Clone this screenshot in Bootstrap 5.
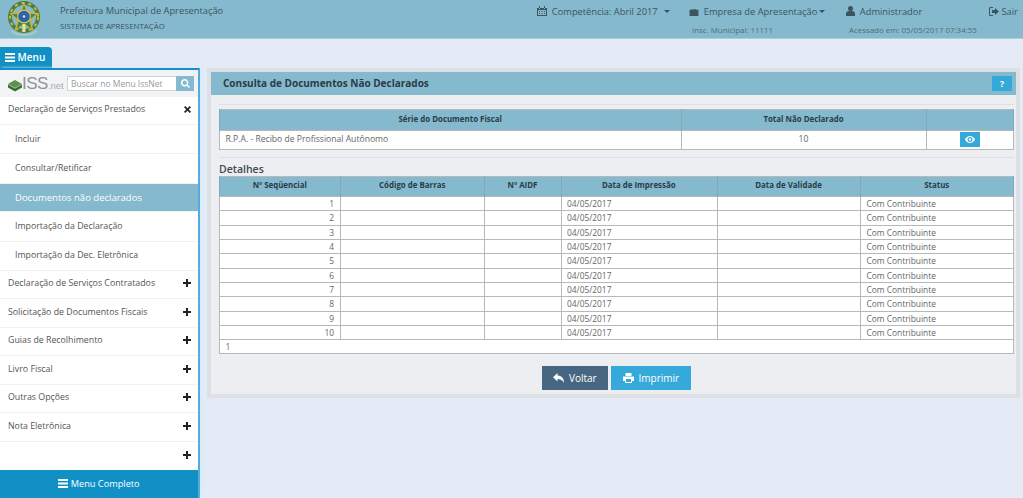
<!DOCTYPE html>
<html lang="pt-BR">
<head>
    <meta charset="UTF-8">
    <title>Consulta de Documentos Não Declarados</title>
    <link href="https://cdn.jsdelivr.net/npm/bootstrap@5.3.0/dist/css/bootstrap.min.css" rel="stylesheet">
    <style>
        html, body { height: 498px; overflow: hidden; }
        body { background: #e4ebf6; font-family: "Open Sans", sans-serif; font-size: 9px; color: #555; }
        svg { fill: currentColor; vertical-align: -1px; }

        /* topo */
        .topbar { height: 39px; background: #85b9cd; border-bottom: 1px solid #a9cfdc; color: #3c5460; }
        .brand-logo { width: 36px; height: 36px; margin: 1px 17px 0 7px; }
        .brand-title { font-size: 9.3px; line-height: 12px; padding-top: 5px; }
        .brand-sub { font-size: 7.9px; line-height: 12px; margin-top: 3px; }
        .top-item { font-size: 9.3px; line-height: 13px; padding-top: 5px; white-space: nowrap; }
        .top-sub { font-size: 7.9px; line-height: 12px; margin: 6px 0 0 3px; color: #4f6e7b; }
        .top-comp { width: 152px; }
        .top-emp { width: 157px; }
        .top-adm { width: 143px; }
        .top-exit { width: 34px; }
        .caret-down { display: inline-block; border: 3px solid transparent; border-top-color: currentColor; border-bottom: 0; margin-left: 2px; vertical-align: 2px; }

        /* menu */
        .menu-tab { width: 52px; height: 21px; margin-top: 8px; background: #1190c6; color: #fff; font-size: 10px; font-weight: 600; line-height: 21px; padding-left: 5px; border-radius: 0 4px 0 0; }
        .side-menu { width: 200px; height: 430px; background: #fff; border-top: 2px solid #1190c6; border-right: 2px solid #5ba9dc; box-shadow: 2px 0 3px #d3eefb; }
        .search-row { height: 27px; padding: 6px 4px 0 8px; background: #f2f3f5; flex-shrink: 0; }
        .iss-logo { width: 59px; font-family: "Liberation Sans", sans-serif; font-size: 17px; line-height: 16px; color: #8d9599; letter-spacing: -0.5px; }
        .iss-logo span { font-size: 9.5px; letter-spacing: 0; line-height: 19px; color: #a5adb1; }
        .menu-search { width: 109px; height: 15px; border: 1px solid #cdd6da; border-right: 0; padding: 0 3px; font-size: 8.5px; color: #999; background: #fff; line-height: 13px; }
        .menu-search-btn { width: 18px; height: 15px; background: #85b9cd; color: #fff; }
        .menu-list { min-height: 0; overflow: hidden; }
        .menu-list .list-group-item { height: 28.5px; flex-shrink: 0; padding: 0 7px 3px 8px; border-color: #f1f2f3; border-width: 0 0 1px; font-size: 8.8px; color: #555; line-height: 22px; }
        .menu-list .list-group-item:first-child { height: 28px; }
        .menu-list .sub-item { height: 29.4px; padding: 0 7px 0 15px; line-height: 27px; }
        .menu-list .list-group-item.active { background: #85b9cd; color: #fff; font-size: 9.5px; }
        .menu-list .list-group-item svg { color: #222; }
        .menu-full { height: 28px; flex-shrink: 0; background: #1190c6; color: #fff; font-size: 9.2px; line-height: 28px; }

        /* painel */
        .main-area { padding: 29px 4px 0 7px; }
        .panel-box { height: 330px; background: #eceef2; border: 4px solid #dde0e5; }
        .panel-title { height: 23px; background: #85b9cd; color: #2a3d48; font-size: 10px; font-weight: 700; line-height: 22px; padding: 0 4px 0 12px; }
        .help-btn { width: 20px; height: 15px; background: #36a9db; color: #fff; font-size: 8.5px; font-weight: 700; line-height: 15px; margin-top: 4px; }
        .panel-content { padding: 0 2px 0 8px; }
        .rule { height: 1px; background: #dcdfe3; }
        .rule-top { margin-top: 9px; margin-bottom: 4px; }
        .rule-mid { margin-top: 7px; }
        .section-title { font-size: 10.5px; font-weight: 600; line-height: 12.500px; margin-top: 5px; color: #3d4a52; }

        .doc-table { table-layout: fixed; width: 794px; margin: 0; background: #fff; border-color: #b5b9bc; font-size: 8.4px; }
        .table.doc-table > * > * > * { padding: 0 6px 0 5.500px; color: #666; background: transparent; box-shadow: none; }
        .table.doc-table > thead > tr > th { background: #85b9cd; color: #2a3d48; font-size: 7.9px; font-weight: 700; text-align: center; border-color: #7fabbc; height: 20.600px; vertical-align: middle; }
        .summary-table tbody td { height: 19.500px; vertical-align: middle; font-size: 8.6px; }
        .detail-table tbody td { height: 14.300px; line-height: 13.300px; }
        .w1 { width: 462px; } .w2 { width: 244.500px; } .w3 { width: 87.500px; }
        .d1 { width: 121px; } .d2 { width: 144px; } .d3 { width: 76.500px; } .d4 { width: 156px; } .d5 { width: 143.500px; } .d6 { width: 153px; }
        .eye-btn { width: 20px; height: 15px; background: #36a9db; color: #fff; }

        .action-btn { height: 24px; border: 0; border-radius: 0; color: #fff; font-size: 10px; line-height: 24px; padding: 0; }
        .action-btn:hover { color: #fff; }
        .action-btn svg { margin-right: 2px; }
        .btn-voltar { width: 66px; background: #466682; }
        .btn-imprimir { width: 80px; background: #36a9db; }
        .action-row { margin-top: 11.500px; gap: 3px; }
    </style>
</head>
<body>
    <!-- topo -->
    <header class="topbar d-flex">
        <svg class="brand-logo flex-shrink-0" viewBox="0 0 36 36">
            <circle cx="17" cy="16" r="14" fill="none" stroke="#4d7f3c" stroke-width="4"/>
            <circle cx="17" cy="16" r="14" fill="none" stroke="#d2b545" stroke-width="2" stroke-dasharray="3 4"/>
            <path d="M17 1l4 10 11 1-8.500 7 3 11L17 24l-9.500 6 3-11L2 12l11-1z" fill="#cdb23f"/>
            <path d="M17 4l3 8.500 9 .7-7 5.800 2.400 8.800L17 22.500 9.600 27.800 12 19l-7-5.800 9-.7z" fill="#3f8a45"/>
            <circle cx="17" cy="15.500" r="7" fill="#d9c25a"/>
            <circle cx="17" cy="15.500" r="5.800" fill="#2d62ad"/>
            <circle cx="17" cy="15.500" r="1.200" fill="#dfe8f2"/>
            <rect x="15.500" y="23" width="3" height="8" fill="#e8dca0"/>
            <path d="M5 29c4 3 8 4 12 4s8-1 12-4l1 2c-4 3-9 4-13 4s-9-1-13-4z" fill="#a9cbbd"/>
        </svg>
        <div class="flex-shrink-0">
            <div class="brand-title">Prefeitura Municipal de Apresentação</div>
            <div class="brand-sub">SISTEMA DE APRESENTAÇÃO</div>
        </div>
        <div class="ms-auto d-flex">
            <div class="top-item top-comp">
                <svg width="10" height="10" viewBox="0 0 10 10"><path d="M0 2h10v8H0zM1 4v5h8V4zM2 0h1v3H2zM7 0h1v3H7zM2 5h1v1H2zM4.500 5h1v1h-1zM7 5h1v1H7zM2 7h1v1H2zM4.500 7h1v1h-1zM7 7h1v1H7z" fill-rule="evenodd"/></svg>
                &nbsp;Competência: Abril 2017 <span class="caret-down ms-1"></span>
            </div>
            <div class="top-item top-emp">
                <svg width="10" height="8" viewBox="0 0 10 9"><path d="M3 2V1h4v1h3v7H0V2zM4 1.500V2h2v-.5z" fill-rule="evenodd"/></svg>
                &nbsp;Empresa de Apresentação<span class="caret-down"></span>
                <div class="top-sub">Insc. Municipal: 11111</div>
            </div>
            <div class="top-item top-adm">
                <svg width="9" height="10" viewBox="0 0 9 10"><circle cx="4.500" cy="2.500" r="2.500"/><path d="M0 10V7.500C0 6 1.500 5 3 5h3c1.500 0 3 1 3 2.500V10z"/></svg>
                &nbsp;Administrador
                <div class="top-sub">Acessado em: 05/05/2017 07:34:55</div>
            </div>
            <div class="top-item top-exit">
                <svg width="10" height="9" viewBox="0 0 10 9"><path d="M0 1.500C0 .7.7 0 1.500 0H4v1H1.500a.5.5 0 0 0-.5.5v6c0 .3.2.5.5.5H4v1H1.500C.7 9 0 8.300 0 7.500zM3 3h3V1l4 3.500L6 8V6H3z"/></svg>
                Sair
            </div>
        </div>
    </header>

    <div class="d-flex">
        <!-- menu lateral -->
        <div class="flex-shrink-0">
            <div class="menu-tab">
                <svg width="10" height="9" viewBox="0 0 10 9"><path d="M0 0h10v2H0zM0 3.500h10v2H0zM0 7h10v2H0z"/></svg> Menu
            </div>
            <nav class="side-menu d-flex flex-column">
                <div class="search-row d-flex">
                    <div class="iss-logo d-flex align-items-start">
                        <svg width="14" height="12" viewBox="0 0 14 12" class="flex-shrink-0 mt-1"><path d="M7 0l7 4-7 4-7-4z" fill="#5c9150"/><path d="M0 4.500l7 4 7-4v3l-7 4-7-4z" fill="#3d6a37"/></svg>
                        ISS<span>.net</span>
                    </div>
                    <div class="menu-search">Buscar no Menu IssNet</div>
                    <div class="menu-search-btn d-flex align-items-center justify-content-center">
                        <svg width="9" height="9" viewBox="0 0 9 9"><path d="M3.700 0a3.700 3.700 0 0 1 3 5.800L9 8l-1 1-2.300-2.300A3.700 3.700 0 1 1 3.700 0zm0 1.500a2.200 2.200 0 1 0 0 4.400 2.200 2.200 0 0 0 0-4.400z" fill-rule="evenodd"/></svg>
                    </div>
                </div>
                <div class="list-group list-group-flush menu-list rounded-0 flex-grow-1" id="menuList"></div>
                <div class="menu-full text-center">
                    <svg width="10" height="9" viewBox="0 0 10 9"><path d="M0 0h10v2H0zM0 3.500h10v2H0zM0 7h10v2H0z"/></svg> Menu Completo
                </div>
            </nav>
        </div>

        <!-- conteúdo -->
        <main class="main-area flex-grow-1">
            <div class="panel-box">
                <div class="panel-title d-flex justify-content-between">
                    <span>Consulta de Documentos Não Declarados</span>
                    <div class="help-btn text-center">?</div>
                </div>
                <div class="panel-content">
                    <div class="rule rule-top"></div>
                    <table class="table table-bordered doc-table summary-table">
                        <colgroup><col class="w1"><col class="w2"><col class="w3"></colgroup>
                        <thead>
                            <tr><th>Série do Documento Fiscal</th><th>Total Não Declarado</th><th></th></tr>
                        </thead>
                        <tbody>
                            <tr>
                                <td>R.P.A. - Recibo de Profissional Autônomo</td>
                                <td class="text-center">10</td>
                                <td class="text-center">
                                    <button class="btn eye-btn p-0 border-0 rounded-0 d-inline-flex align-items-center justify-content-center align-middle">
                                        <svg width="10" height="7" viewBox="0 0 10 7"><path d="M5 0c2.200 0 4 1.500 5 3.500C9 5.500 7.200 7 5 7S1 5.500 0 3.500C1 1.500 2.800 0 5 0zm0 1a2.500 2.500 0 1 0 0 5 2.500 2.500 0 0 0 0-5zm0 1.200a1.300 1.300 0 1 1 0 2.600 1.300 1.300 0 0 1 0-2.600z" fill-rule="evenodd"/></svg>
                                    </button>
                                </td>
                            </tr>
                        </tbody>
                    </table>
                    <div class="rule rule-mid"></div>
                    <div class="section-title">Detalhes</div>
                    <table class="table table-bordered doc-table detail-table">
                        <colgroup><col class="d1"><col class="d2"><col class="d3"><col class="d4"><col class="d5"><col class="d6"></colgroup>
                        <thead>
                            <tr>
                                <th>Nº Seqüencial</th><th>Código de Barras</th><th>Nº AIDF</th>
                                <th>Data de Impressão</th><th>Data de Validade</th><th>Status</th>
                            </tr>
                        </thead>
                        <tbody id="detailRows"></tbody>
                    </table>
                    <div class="d-flex justify-content-center action-row">
                        <button class="btn action-btn btn-voltar">
                            <svg width="11" height="10" viewBox="0 0 11 10"><path d="M4.500 0v2.500C8 2.500 11 4.500 11 10 9.500 7 7.500 6 4.500 6v2.500L0 4.200z"/></svg> Voltar
                        </button>
                        <button class="btn action-btn btn-imprimir">
                            <svg width="11" height="10" viewBox="0 0 11 10"><path d="M2.500 0h6v3h-6zM0 3.500h11V8H9v2H2V8H0zM3 6v3h5V6z" fill-rule="evenodd"/></svg> Imprimir
                        </button>
                    </div>
                </div>
            </div>
        </main>
    </div>

    <script>
        const plus = '<svg width="8" height="8" viewBox="0 0 8 8"><path d="M3 0h2v3h3v2H5v3H3V5H0V3h3z"/></svg>';
        const cross = '<svg width="7" height="7" viewBox="0 0 7 7"><path d="M1.200 0L3.500 2.300 5.800 0 7 1.200 4.700 3.500 7 5.800 5.800 7 3.500 4.700 1.200 7 0 5.800 2.300 3.500 0 1.200z"/></svg>';

        const menuItems = [
            { label: "Declaração de Serviços Prestados", icon: cross },
            { label: "Incluir", sub: true },
            { label: "Consultar/Retificar", sub: true },
            { label: "Documentos não declarados", sub: true, active: true },
            { label: "Importação da Declaração", sub: true },
            { label: "Importação da Dec. Eletrônica", sub: true },
            { label: "Declaração de Serviços Contratados", icon: plus },
            { label: "Solicitação de Documentos Fiscais", icon: plus },
            { label: "Guias de Recolhimento", icon: plus },
            { label: "Livro Fiscal", icon: plus },
            { label: "Outras Opções", icon: plus },
            { label: "Nota Eletrônica", icon: plus },
            { label: "", icon: plus }
        ];

        document.getElementById("menuList").innerHTML = menuItems.map(m => `
            <div class="list-group-item d-flex justify-content-between align-items-center rounded-0 ${m.sub ? "sub-item" : ""} ${m.active ? "active" : ""}">
                <span>${m.label}</span>${m.icon || ""}
            </div>`).join("");

        let rows = "";
        for (let i = 1; i <= 10; i++) {
            rows += `<tr><td class="text-end">${i}</td><td></td><td></td><td>04/05/2017</td><td></td><td>Com Contribuinte</td></tr>`;
        }
        rows += `<tr><td colspan="6">1</td></tr>`;
        document.getElementById("detailRows").innerHTML = rows;
    </script>
</body>
</html>
